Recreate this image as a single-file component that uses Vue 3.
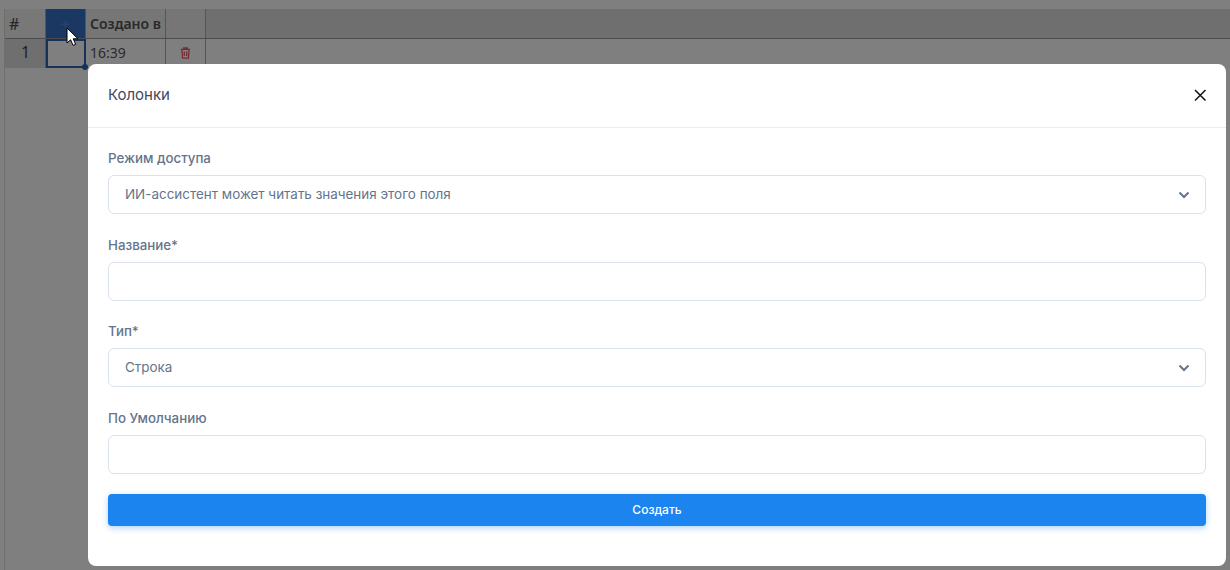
<script setup>
const fields = [
  { label: 'Режим доступа', value: 'ИИ-ассистент может читать значения этого поля', select: true },
  { label: 'Название*', value: '', select: false },
  { label: 'Тип*', value: 'Строка', select: true },
  { label: 'По Умолчанию', value: '', select: false },
]
</script>

<template>
  <div class="page">
    <div class="sheet">
      <div class="row head">
        <div class="cell c1 hash">#</div>
        <div class="cell c2 active"><span class="plus">+</span></div>
        <div class="cell c3">Создано в</div>
        <div class="cell c4"></div>
        <div class="cell rest"></div>
      </div>
      <div class="row body">
        <div class="cell c1 num">1</div>
        <div class="cell c2 selected"><span class="handle"></span></div>
        <div class="cell c3">16:39</div>
        <div class="cell c4 trash">
          <svg width="13" height="14" viewBox="0 0 14 14" fill="none" stroke="#ee5a6c" stroke-width="1.4">
            <path d="M2 3.2h10M5 3V1.6h4V3M3.2 3.2l.6 9.3h6.4l.6-9.3M5.7 5.5v4.8M8.3 5.5v4.8" />
          </svg>
        </div>
        <div class="cell rest"></div>
      </div>
    </div>

    <div class="overlay"></div>

    <svg class="cursor" width="14" height="20" viewBox="0 0 14 20">
      <path d="M1 1v15l3.6-3.2 2.5 5.6 2.6-1.1-2.5-5.5h4.8z" fill="#fff" stroke="#000" stroke-width="1" />
    </svg>

    <div class="modal">
      <header class="modal-head">
        <h2 class="title">Колонки</h2>
        <svg class="close" width="14" height="14" viewBox="0 0 14 14" fill="none" stroke="#111" stroke-width="1.5">
          <path d="M2 2l10.5 10.5M12.5 2L2 12.5" />
        </svg>
      </header>
      <div class="modal-body">
        <div v-for="f in fields" :key="f.label" class="field">
          <label class="label">{{ f.label }}</label>
          <div class="control">
            <span class="value">{{ f.value }}</span>
            <svg v-if="f.select" width="12" height="8" viewBox="0 0 12 8" fill="none" stroke="#64748b" stroke-width="2">
              <path d="M1.5 1.5L6 6l4.5-4.5" />
            </svg>
          </div>
        </div>
        <button class="submit" type="button">Создать</button>
      </div>
    </div>
  </div>
</template>

<style>
html, body { margin: 0; padding: 0; background: #fff; }
</style>

<style scoped>
.page {
  position: relative;
  width: 1230px;
  height: 570px;
  overflow: hidden;
  background: #fff;
  box-sizing: border-box;
  padding: 9px 0 0 5px;
  font-family: "Inter", "Noto Sans", sans-serif;
}
.sheet {
  display: flex;
  flex-direction: column;
  border-left: 1px solid #ddd;
  margin-left: -1px;
  height: 100%;
  font-family: "Noto Sans", "Open Sans", sans-serif;
  font-size: 14px;
  color: #555;
}
.row { display: flex; box-sizing: border-box; }
.head {
  height: 30px;
  background: #dedede;
  border-bottom: 1px solid #999;
  font-weight: 600;
}
.body { height: 30px; }
.cell {
  box-sizing: border-box;
  display: flex;
  align-items: center;
  border-right: 1px solid #aaa;
  padding-left: 4px;
}
.body .cell { padding-bottom: 3px; }
.c1 { width: 41px; }
.c2 { width: 40px; position: relative; }
.c3 { width: 80px; }
.c4 { width: 40px; justify-content: center; padding-left: 0; }
.body .c4 { padding-right: 1px; }
.rest { flex: 1; border-right: none; }
.head .c1 { background: #f0f0f0; }
.head .c3, .head .c4 { background: #ececec; }
.hash { padding-left: 4px; font-size: 16px; font-weight: 500; }
.body .num { background: #dedede; justify-content: center; padding-left: 1px; height: 29px; font-size: 16px; font-weight: 400; color: #444; }
.active { background: #3671c6; justify-content: center; padding-left: 0; }
.plus { color: #4a86d8; font-size: 16px; }
.selected { border: 2px solid #2a64b0; margin-left: 0; height: 29px; }
.handle {
  position: absolute;
  right: -4px;
  bottom: -4px;
  width: 6px;
  height: 6px;
  border-radius: 50%;
  background: #2a64b0;
}
.overlay {
  position: absolute;
  inset: 0;
  background: rgba(0, 0, 0, 0.5);
}
.cursor { position: absolute; left: 66px; top: 27px; }
.modal {
  position: absolute;
  left: 88px;
  top: 64px;
  width: 1138px;
  height: 502px;
  background: #fff;
  border-radius: 8px;
  overflow: hidden;
}
.modal-head {
  height: 64px;
  box-sizing: border-box;
  border-bottom: 1px solid #e9edf2;
  display: flex;
  align-items: center;
  justify-content: space-between;
  padding: 0 19px 2px 20px;
}
.title {
  margin: 0;
  font-size: 15px;
  font-weight: 400;
  color: #3f4a63;
}
.modal-body {
  padding: 21px 20px 0;
  display: flex;
  flex-direction: column;
}
.field { margin-bottom: 21.67px; }
.field:last-of-type { margin-bottom: 20px; }
.label {
  display: block;
  font-size: 13.3px;
  font-weight: 500;
  line-height: 19px;
  color: #64748b;
  margin-bottom: 7px;
}
.control {
  height: 39px;
  box-sizing: border-box;
  border: 1px solid #dbe2ec;
  border-radius: 6px;
  display: flex;
  align-items: center;
  justify-content: space-between;
  padding: 0 15px 0 16px;
  font-size: 13.45px;
  color: #64748b;
}
.value { position: relative; top: -1px; }
.submit {
  height: 32px;
  border: none;
  border-radius: 4px;
  background: #1b84ef;
  color: #fff;
  font-family: inherit;
  font-size: 12px;
  font-weight: 500;
  padding-left: 6px;
  box-shadow: 0 2px 6px rgba(27, 132, 239, 0.35);
}
</style>
